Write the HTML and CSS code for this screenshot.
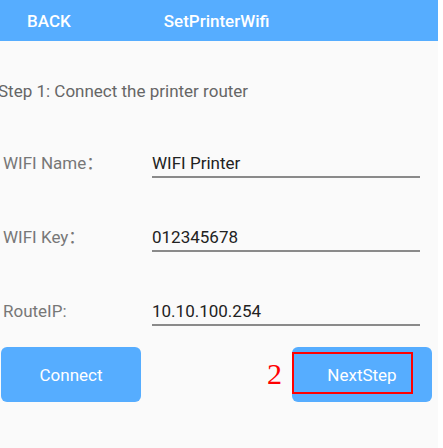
FILE: index.html
```html
<!DOCTYPE html>
<html lang="en">
<head>
  <meta charset="UTF-8">
  <meta name="viewport" content="width=device-width, initial-scale=1.0">
  <title>SetPrinterWifi</title>
  <link rel="stylesheet" href="styles.css">
</head>
<body>

<div class="screen">
  <div class="topbar">
    <span class="back">BACK</span>
    <span class="title">SetPrinterWifi</span>
  </div>

  <div class="content">
    <p class="step">Step 1: Connect the printer router</p>

    <div class="row">
      <span class="label">WIFI Name：</span>
      <span class="field">WIFI Printer</span>
    </div>
    <div class="row">
      <span class="label">WIFI Key：</span>
      <span class="field">012345678</span>
    </div>
    <div class="row">
      <span class="label">RouteIP:</span>
      <span class="field">10.10.100.254</span>
    </div>

    <div class="buttons">
      <button class="btn">Connect</button>
      <button class="btn next">
        <span class="mark-num">2</span>
        <span class="mark-box"></span>
        NextStep
      </button>
    </div>
  </div>
</div>

</body>
</html>
```

FILE: styles.css
```css
html { background: #fff; }
body { margin: 0; font-family: Roboto, "Noto Sans CJK SC", sans-serif; }
.screen { width: 438px; height: 448px; background: #fafafa; overflow: hidden; }

.topbar { height: 41px; background: #56adff; color: #fff; display: flex; align-items: center; font-size: 17px; font-weight: 500; }
.back { margin-left: 27px; }
.title { margin-left: 93px; }

.content { padding-top: 1px; }
.step { margin: 39px 0 0 -2px; font-size: 17px; line-height: 20px; color: #666; }

.row { display: flex; align-items: flex-end; margin-top: 52px; }
.row + .row { margin-top: 49px; }
.label { width: 149px; margin-left: 3px; padding-bottom: 5px; font-size: 17px; line-height: 20px; color: #777; }
.field { width: 268px; padding-bottom: 3px; border-bottom: 2px solid #8a8a8a; font-size: 17px; line-height: 20px; color: #222; }

.buttons { display: flex; justify-content: space-between; width: 431px; margin: 21px 0 0 1px; }
.btn { position: relative; width: 140px; height: 55px; border: none; border-radius: 6px; background: #56adff; color: #fff; font-family: Roboto, sans-serif; font-size: 17px; padding: 0; }

.mark-box { position: absolute; left: 0; top: 5px; width: 117px; height: 38px; border: 2px solid #ff0000; }
.mark-num { position: absolute; left: -25px; top: 10px; font-family: "Liberation Serif", serif; font-size: 30px; color: #ff0000; }
```
